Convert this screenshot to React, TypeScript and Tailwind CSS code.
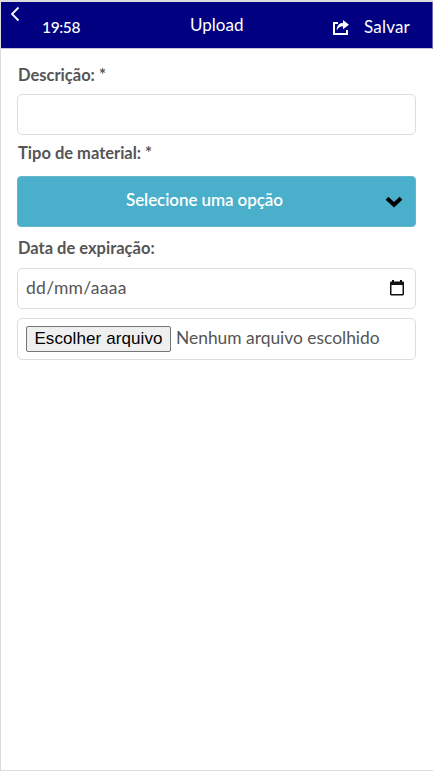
export default function App() {
  return (
    <div className="flex h-[771px] w-[433px] flex-col border-t-2 border-b border-l border-[#dcdce0] bg-white font-['Lato',sans-serif] text-[17px] leading-5 text-[#555]">
      <header className="flex h-[47px] shrink-0 border-r border-b border-r-[#6666b3] border-b-[#c4c4dc] bg-[#000080] text-white">
        <svg className="mt-[4px] ml-[9px] h-4 w-[10px] shrink-0" viewBox="0 0 10 16" fill="none" stroke="currentColor" strokeWidth="1.8">
          <path d="M8.5 1.5L2 8l6.5 6.5" />
        </svg>
        <span className="mt-[15px] ml-[22px] w-[148px] text-[15.5px] font-medium tracking-[-0.35px]">19:58</span>
        <h1 className="mt-[13px] w-[142px] text-[17px]">Upload</h1>
        <button className="mt-[15px] flex h-5 items-start">
          <svg className="mt-[2px] h-[17px] w-[18px]" viewBox="0 0 18 17" fill="none">
            <path d="M6 4H2v11h13V11" stroke="currentColor" strokeWidth="2" />
            <path d="M4.7 11.5C4.8 6.5 7 4 11 4V1l6 4.8-6 4.5V7.2c-2.7 0-4.6 1.2-6.3 4.3Z" fill="currentColor" />
          </svg>
          <span className="ml-[14px] text-[17px] tracking-[0.2px]">Salvar</span>
        </button>
      </header>
      <main className="flex w-[415px] flex-col pl-4">
        <label className="mt-4 h-5 pl-px text-[16.5px] font-bold">Descrição: *</label>
        <input className="mt-[9px] h-[41px] rounded-[5px] border border-[#dedede]" />
        <label className="mt-2 h-5 pl-px text-[16.5px] font-bold">Tipo de material: *</label>
        <button className="mt-[13px] flex h-[51px] items-center rounded-[4px] border border-[#65b5cb] bg-[#4aafca] text-white">
          <span className="mb-[3px] ml-[108px] w-[259px] text-left text-[17px] font-semibold tracking-[-0.08px]">Selecione uma opção</span>
          <svg className="h-[12px] w-[18px]" viewBox="0 0 18 12" fill="none" stroke="#000" strokeWidth="4">
            <path d="M2 2.3l7 6.4 7-6.4" />
          </svg>
        </button>
        <label className="mt-[11px] h-5 pl-px text-[16.5px] font-bold">Data de expiração:</label>
        <div className="mt-[10px] flex h-[41px] items-center rounded-[5px] border border-[#dedede] pl-2">
          <span className="mb-px w-[364px] text-[17.5px] tracking-[0.3px]">dd/mm/aaaa</span>
          <svg className="mb-px h-4 w-[14px]" viewBox="0 0 14 16">
            <path d="M2 0h2v1.5h6V0h2v1.5h1.2l.8.8v12.2l-1 1H1l-1-1V2.3l.8-.8H2ZM1.5 5v9h11V5Z" fill="#111" fillRule="evenodd" />
          </svg>
        </div>
        <div className="mt-[9px] flex h-[42px] items-center rounded-[5px] border border-[#dedede] pl-2">
          <button className="h-[26px] w-[145px] shrink-0 rounded-[2px] border border-[#767676] bg-[#efefef] font-['Liberation_Sans',sans-serif] text-[17px] tracking-[0.1px] text-black">Escolher arquivo</button>
          <span className="mb-[2px] ml-[5px] whitespace-nowrap text-[17.4px]">Nenhum arquivo escolhido</span>
        </div>
      </main>
    </div>
  )
}
